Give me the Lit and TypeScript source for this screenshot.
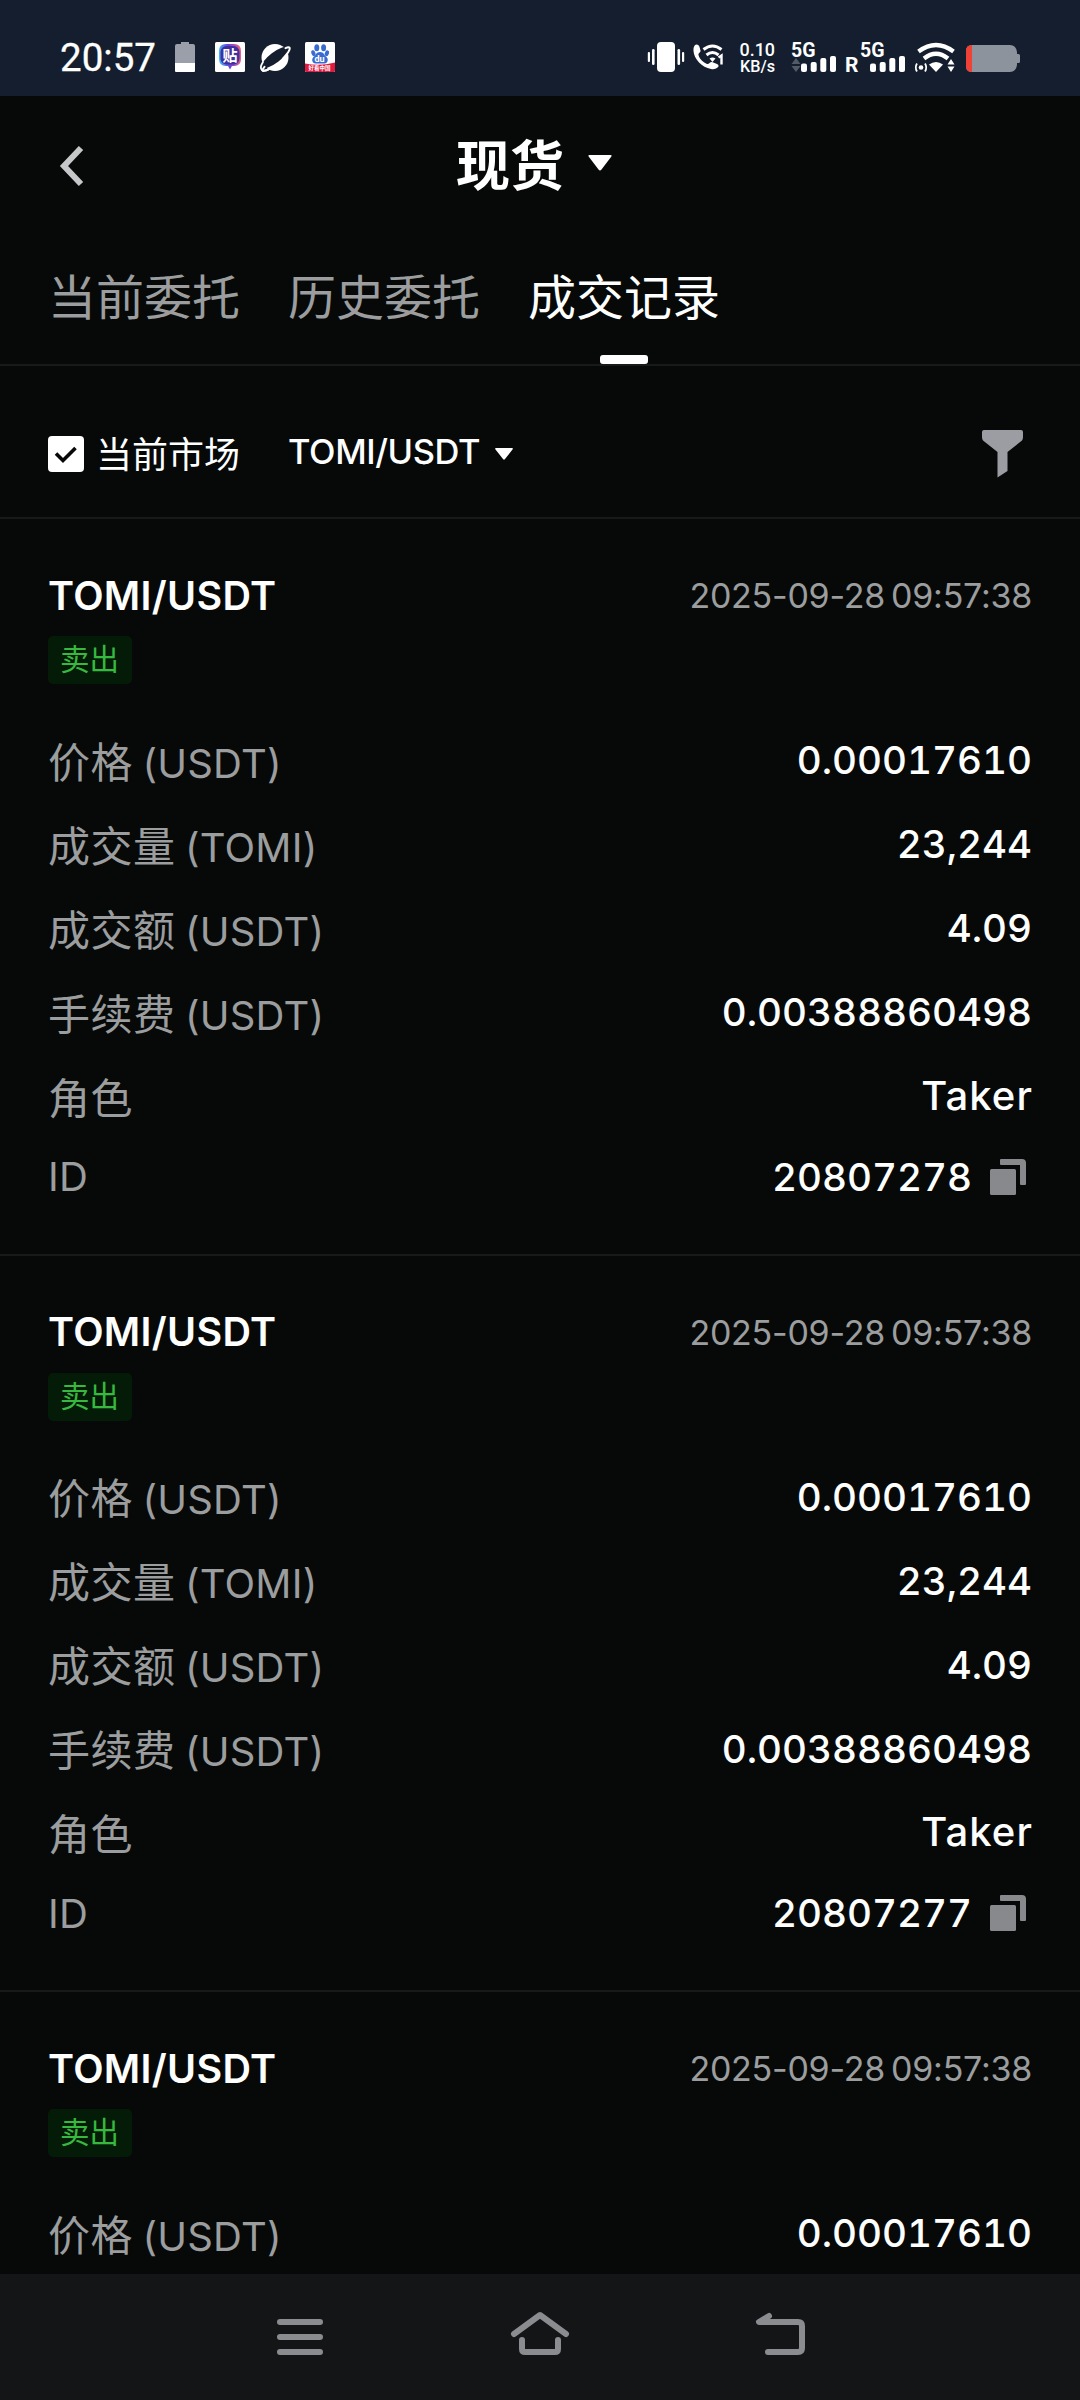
import { LitElement, html, css, svg } from "lit";
import { customElement, property } from "lit/decorators.js";

interface Trade {
  pair: string;
  time: string;
  side: string;
  rows: [string, string][];
  id?: string;
}

const rows: [string, string][] = [
  ["价格 (USDT)", "0.00017610"],
  ["成交量 (TOMI)", "23,244"],
  ["成交额 (USDT)", "4.09"],
  ["手续费 (USDT)", "0.00388860498"],
  ["角色", "Taker"],
];

const base = { pair: "TOMI/USDT", time: "2025-09-28 09:57:38", side: "卖出" };

const trades: Trade[] = [
  { ...base, rows, id: "20807278" },
  { ...base, rows, id: "20807277" },
  { ...base, rows: rows.slice(0, 1) },
];

@customElement("status-bar")
export class StatusBar extends LitElement {
  static styles = css`
    :host { display: flex; align-items: center; justify-content: space-between; height: 96px; flex: none;
      background: #141e2e; color: #fff; font-family: Roboto, "Noto Sans CJK SC", sans-serif; }
    .left, .right { display: block; height: 96px; }
    .time { font-size: 39px; font-weight: 400; stroke: #fff; stroke-width: 0.3px; }
    .mark { font-family: "Noto Sans CJK SC", sans-serif; }
    .rate { font-size: 19px; font-weight: 500; }
    .net { font-size: 20px; font-weight: 700; }
    .reg { font-size: 21px; font-weight: 700; }
  `;

  private bars(x: number) {
    return svg`<g fill="#fff">
      <rect x=${x} y="63.5" width="6" height="8.5" rx="2"/>
      <rect x=${x + 9.7} y="62" width="6" height="10" rx="2"/>
      <rect x=${x + 19.3} y="58" width="6" height="14" rx="2"/>
      <rect x=${x + 29} y="56" width="6" height="16" rx="2"/></g>`;
  }

  render() {
    return html`
      <svg class="left" width="360" height="96" viewBox="0 0 360 96">
        <defs>
          <linearGradient id="ring" x1="0" y1="0.3" x2="1" y2="0.2">
            <stop offset="0" stop-color="#3cb4f5"/><stop offset="0.45" stop-color="#6a3fe0"/><stop offset="1" stop-color="#f2637c"/>
          </linearGradient>
        </defs>
        <text class="time" x="60" y="70.5" fill="#fff" textLength="96" lengthAdjust="spacingAndGlyphs">20:57</text>
        <path d="M175 63V46q0-2 2-2h4v-2h8v2h4q2 0 2 2v17z" fill="#9a9fa9"/>
        <path d="M175 63h20v8q0 1-1 1h-18q-1 0-1-1z" fill="#fff"/>
        <rect x="215" y="42" width="30" height="30" rx="1.5" fill="#fff"/>
        <path d="M226 44h8q7 0 7 7v8q0 7-7 7h-2l-2 3.500-2-3.500h-2q-7 0-7-7v-8q0-7 7-7z" fill="url(#ring)"/>
        <rect x="220.500" y="46" width="19" height="18.500" rx="6" fill="#40309e"/>
        <text class="mark" x="222.500" y="61" font-size="15" font-weight="700" fill="#fff">贴</text>
        <circle cx="275" cy="57.500" r="13.500" fill="#fff"/>
        <ellipse cx="275" cy="57.500" rx="16.500" ry="5.200" transform="rotate(-37 275 57.500)" fill="#141e2e"/>
        <path d="M285.500 47.800c3.500-1.500 5-.8 3.800 2-1.200 3-3.500 5.500-6.500 8.500M264.500 66.500c-2.500 3-3 4.500-.3 4 3.200-.6 6.300-2.300 9.800-4.500" transform="translate(0 .3)" fill="none" stroke="#fff" stroke-width="2" stroke-linecap="round"/>
        <path d="M263 62c-2.200 3.500-2.600 6.800-1 8 1.200 1 3.500.7 6-.2" fill="none" stroke="#fff" stroke-width="1.800" stroke-linecap="round"/>
        <rect x="305" y="42" width="30" height="30" rx="1.500" fill="#fff"/>
        <g fill="#386bd2">
          <ellipse cx="316.800" cy="47.800" rx="2.500" ry="3.500"/><ellipse cx="323.600" cy="47.800" rx="2.500" ry="3.500"/>
          <ellipse cx="313.300" cy="53.300" rx="2" ry="3" transform="rotate(-20 313 53)"/><ellipse cx="327" cy="53.300" rx="2" ry="3" transform="rotate(20 327 53)"/>
          <path d="M320 52c4 0 4 3 6 4.500 3 2 2 7-1.500 7h-9c-3.500 0-4.500-5-1.500-7 2-1.500 2-4.500 6-4.500z"/>
        </g>
        <text x="314.500" y="62" font-size="9" font-weight="700" fill="#fff">du</text>
        <path d="M305 63.500q15 3 30-1v8q0 1.500-1.500 1.500h-27q-1.500 0-1.500-1.500z" fill="#df1b40"/>
        <text class="mark" x="308.500" y="70.300" font-size="5.500" font-weight="700" fill="#fff">好看中国</text>
      </svg>
      <svg class="right" width="450" height="96" viewBox="630 0 450 96">
        <g fill="#fff">
          <rect x="657" y="42" width="18" height="30" rx="4"/>
          <rect x="652" y="49" width="2.600" height="16" rx="1.300"/><rect x="647.800" y="52" width="2.200" height="10" rx="1"/>
          <rect x="677.500" y="49" width="2.600" height="16" rx="1.300"/><rect x="682" y="52" width="2.200" height="10" rx="1"/>
          <path d="M695 45c2-1.500 4 0 4.500 2l1 3.500c.4 2-2.500 2.500-2 4.500 1 4 5 7.500 8.500 9 2 .7 3-2.500 5-2l5 2c2 1 2 2.500.5 3.500-2 1.700-4 2-6.500 1.500-9-1.500-17-10-17.500-18-.2-2.500.3-4.700 1.500-6z"/>
        </g>
        <g fill="none" stroke="#fff" stroke-width="3">
          <path d="M703.500 49.500q9-7 18 0"/><path d="M706.500 55q6-5 12 0"/>
        </g>
        <path d="M709.500 58.500q3-2 6 0l-3 3.500z" fill="#fff"/>
        <path d="M718.500 57.500l3-2v9" fill="none" stroke="#fff" stroke-width="2.400"/>
        <g class="rate" fill="#fff">
          <text x="739.500" y="55.500" textLength="35.500" lengthAdjust="spacingAndGlyphs">0.10</text>
          <text x="740" y="71.700" font-size="16.500" textLength="35" lengthAdjust="spacingAndGlyphs">KB/s</text>
        </g>
        <text class="net" x="791" y="56.500" fill="#fff" textLength="24.500" lengthAdjust="spacingAndGlyphs">5G</text>
        <path d="M796 58l4.500 6h-9zM791.500 66h9l-4.500 6z" fill="#515a67"/>
        ${this.bars(801)}
        <text class="reg" x="845" y="72" fill="#fff">R</text>
        <text class="net" x="860" y="56.500" fill="#fff" textLength="24.500" lengthAdjust="spacingAndGlyphs">5G</text>
        ${this.bars(870)}
        <g fill="none" stroke="#fff" stroke-width="4.300">
          <path d="M918.500 51.500q17.500-13 35 0"/><path d="M924 58.500q12-9.500 24 0"/>
        </g>
        <path d="M929 64.500q7-5 14 0l-7 7.500z" fill="#fff"/>
        <circle cx="921" cy="67.500" r="2.300" fill="#fff"/>
        <path d="M917 63.500q-2.500 4 0 8M925 63.500q2.500 4 0 8" stroke="#fff" stroke-width="1.800" fill="none"/>
        <path d="M951 59l3.500 5.500h-7zM947.500 66.500h7l-3.500 5.500z" fill="#fff"/>
        <path d="M972 45h38q6 0 7 7v2h1.500q1.500 0 1.500 1.500v6q0 1.500-1.500 1.500h-1.500v2q-1 7-7 7h-38q-6 0-6-6v-15q0-6 6-6z" fill="#8d939d"/>
        <path d="M972 45v27q-6 0-6-6v-15q0-6 6-6z" fill="#ef4136"/>
      </svg>`;
  }
}

@customElement("trade-card")
export class TradeCard extends LitElement {
  @property({ attribute: false }) trade!: Trade;

  static styles = css`
    :host { display: block; box-sizing: border-box; height: 736.5px; flex: none; padding: 49px 48px 0;
      border-bottom: 2px solid #17191a; font-family: Inter, "Noto Sans CJK SC", sans-serif; }
    :host(.partial) { height: auto; border-bottom: 0; }
    .head { display: flex; justify-content: space-between; align-items: center; height: 55px; }
    .pair { font-size: 39.5px; font-weight: 600; color: #fff; letter-spacing: 0.3px; }
    .time { font-size: 34px; color: #9b9d9e; letter-spacing: -0.25px; word-spacing: -3.2px; }
    .side { display: flex; box-sizing: border-box; width: 84px; height: 48px; margin-top: 13px; padding: 0 1px 2px 0; align-items: center; justify-content: center;
      background: #041b07; border-radius: 5px; color: #37b83f; font-size: 29.5px; line-height: 44px; }
    .rows { display: flex; flex-direction: column; margin-top: 33px; }
    .row { display: flex; height: 84px; align-items: center; justify-content: space-between; white-space: nowrap; }
    .row.id { height: 79px; }
    .label { font-size: 40px; color: #9b9d9e; letter-spacing: 0.2px; word-spacing: -2px; }
    .cjk { font-size: 42px; letter-spacing: 0.5px; }
    .value { display: flex; align-items: center; gap: 18px; font-size: 38.6px; font-weight: 500; color: #fff; font-feature-settings: "tnum"; }
    .row:not(.id) .value:not(.word) { padding-top: 2px; }
    .value.word { font-size: 40px; letter-spacing: 1.1px; margin-right: -1px; }
    .copy { display: block; margin-right: 6px; }
  `;

  private label(text: string) {
    const at = text.indexOf(" ");
    return at < 0
      ? html`<span class="label cjk">${text}</span>`
      : html`<span class="label"><span class="cjk">${text.slice(0, at)}</span>${text.slice(at)}</span>`;
  }

  render() {
    const t = this.trade;
    return html`
      <div class="head"><span class="pair">${t.pair}</span><span class="time">${t.time}</span></div>
      <div class="side">${t.side}</div>
      <div class="rows">
        ${t.rows.map(([k, v]) => html`<div class="row">${this.label(k)}<span class="value ${/^[A-Z]/.test(v) ? "word" : ""}">${v}</span></div>`)}
        ${t.id ? html`<div class="row id">
          <span class="label">ID</span>
          <span class="value">${t.id}
            <svg class="copy" width="36" height="36" viewBox="0 0 36 36" fill="#87898c">
              <rect x="0" y="10" width="26" height="26" rx="1.500"/>
              <path d="M11 0h21q4 0 4 4v21q0 1-1 1h-4q-1 0-1-1V6H11q-1 0-1-1V1q0-1 1-1z"/>
            </svg>
          </span>
        </div>` : ""}
      </div>`;
  }
}

@customElement("app-root")
export class AppRoot extends LitElement {
  static styles = css`
    :host { display: flex; flex-direction: column; width: 1080px; height: 2400px; overflow: hidden; background: #060908;
      color: #fff; font-family: Inter, "Noto Sans CJK SC", sans-serif; }
    .title { display: grid; grid-template-columns: 1fr auto 1fr; align-items: center; height: 139px; flex: none; }
    .back { margin-left: 57px; }
    .name { display: flex; align-items: center; gap: 24px; font-size: 54px; font-weight: 700; padding: 0 12px 6px 0; }
    .tabs { display: flex; gap: 48px; height: 131px; padding: 0 48px; flex: none; border-bottom: 2px solid #17191a; box-sizing: border-box; }
    .tab { display: flex; flex-direction: column; align-items: center; justify-content: space-between; font-size: 48px; line-height: 126px; height: 129px; color: #9b9d9e; }
    .tab span { height: 119px; }
    .tab.on { color: #fff; }
    .tab.on::after { content: ""; width: 48px; height: 9px; border-radius: 3px; background: #fff; }
    .filter { display: flex; align-items: center; height: 153px; padding: 24px 57px 0 48px; flex: none; border-bottom: 2px solid #17191a; box-sizing: border-box; }
    .market { font-size: 36px; margin-left: 12px; padding-bottom: 3px; }
    .symbol { font-size: 34.5px; font-weight: 500; margin-left: 48px; letter-spacing: -0.4px; padding-bottom: 4px; }
    .tri { margin-left: 15px; }
    .funnel { margin-left: auto; }
    .list { flex: 1; min-height: 0; overflow: hidden; display: flex; flex-direction: column; }
    .nav { height: 126px; flex: none; background: #141517; }
    svg { display: block; }
  `;

  render() {
    return html`
      <status-bar></status-bar>
      <div class="title">
        <svg class="back" width="30" height="44" viewBox="0 0 30 44"><path d="M24 4L7 22l17 18" fill="none" stroke="#c6c7c8" stroke-width="6"/></svg>
        <div class="name">现货<svg width="24" height="16" viewBox="0 0 24 16"><path d="M1.500 0h21q2 0 .5 2L13.500 14.500q-1.500 2-3 0L1 2q-1.500-2 .5-2z" fill="#fff"/></svg></div>
      </div>
      <div class="tabs">
        <div class="tab"><span>当前委托</span></div>
        <div class="tab"><span>历史委托</span></div>
        <div class="tab on"><span>成交记录</span></div>
      </div>
      <div class="filter">
        <svg width="36" height="36" viewBox="0 0 36 36"><rect width="36" height="36" rx="4" fill="#fff"/><path d="M8 17.500l7 7L27.500 12" fill="none" stroke="#060908" stroke-width="3.600"/></svg>
        <span class="market">当前市场</span>
        <span class="symbol">TOMI/USDT</span>
        <svg class="tri" width="18" height="12" viewBox="0 0 18 12"><path d="M1 0h16q1.500 0 .5 1.500L10 11q-1 1.300-2 0L.5 1.500Q-.5 0 1 0z" fill="#fff"/></svg>
        <svg class="funnel" width="41" height="48" viewBox="0 0 41 48"><path d="M2 0h37q2 0 2 2v5q0 2-1 3.500L25.500 22v19l-10 6.500V22L1 10.500Q0 9 0 7V2q0-2 2-2z" fill="#9b9da3"/></svg>
      </div>
      <div class="list">${trades.map((t) => html`<trade-card class=${t.id ? "" : "partial"} .trade=${t}></trade-card>`)}</div>
      <div class="nav">
        <svg width="1080" height="126" viewBox="0 2274 1080 126" fill="none" stroke="#8b8c8f" stroke-width="6" stroke-linecap="round" stroke-linejoin="round">
          <path d="M280 2322h40M280 2337h40M280 2352h40"/>
          <path d="M514 2334l26-19 26 19M522 2340v9q0 3 3 3h30q3 0 3-3v-9"/>
          <path d="M769 2316l-10 6h39q4 0 4 4v22q0 4-4 4h-30"/>
        </svg>
      </div>`;
  }
}
